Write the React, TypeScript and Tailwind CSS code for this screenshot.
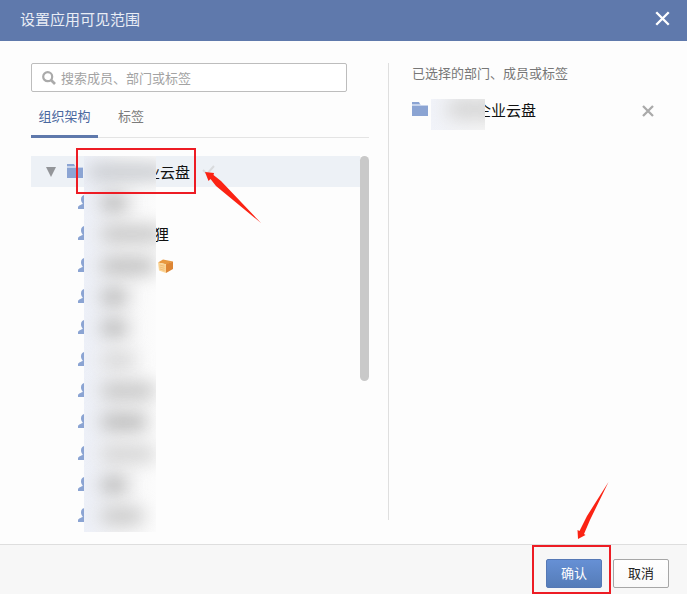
import React from "react";

type Smudge = {
  className: string;
};

type Member = {
  id: number;
  tail?: string;
  box?: boolean;
};

const members: Member[] = [
  { id: 1 },
  { id: 2, tail: "狸" },
  { id: 3, box: true },
  { id: 4 },
  { id: 5 },
  { id: 6 },
  { id: 7 },
  { id: 8 },
  { id: 9 },
  { id: 10 },
  { id: 11 },
];

// one entry per tree row, top to bottom
const smudges: Smudge[] = [
  { className: "ml-1 w-20 bg-[#c3c6cb]" },
  { className: "ml-4 w-7 bg-[#b2b2b2]" },
  { className: "ml-4 w-16 bg-[#c2c2c2]" },
  { className: "ml-4 w-14 bg-[#bababa]" },
  { className: "ml-4 w-7 bg-[#b2b2b2]" },
  { className: "ml-4 w-7 bg-[#b2b2b2]" },
  { className: "ml-4 w-9 bg-[#d4d4d4]" },
  { className: "ml-4 w-14 bg-[#c0c0c0]" },
  { className: "ml-4 w-12 bg-[#b4b4b4]" },
  { className: "ml-4 w-14 bg-[#d0d0d0]" },
  { className: "ml-4 w-7 bg-[#b2b2b2]" },
  { className: "ml-4 w-11 bg-[#c4c4c4]" },
];

const FolderIcon = () => (
  <svg width="16" height="14" viewBox="0 0 16 14" className="shrink-0">
    <path d="M0 0h7l1 2H0z" fill="#8ba4d3" />
    <path d="M0 4h16v10H0z" fill="#8ba4d3" />
    <path d="M0 2h8l1 1h7v1H0z" fill="#c6d3eb" />
  </svg>
);

const PersonIcon = () => (
  <svg width="14" height="14" viewBox="0 0 14 14" className="shrink-0">
    <path
      d="M7 0C4.500 0 3 1.700 3 4.200c0 1.700.6 3 1.600 4L4.600 9C3.200 9.800 0 10.600 0 12.200V14h14v-1.800c0-1.600-3.200-2.400-4.600-3.200v-.8c1-1 1.600-2.300 1.600-4C11 1.700 9.500 0 7 0z"
      fill="#8ba4d3"
    />
  </svg>
);

const BoxIcon = () => (
  <svg width="15" height="14" viewBox="0 0 15 14" className="shrink-0">
    <path d="M0 3.500 5 0.500 15 2.500 9 5.500z" fill="#e8983f" />
    <path d="M0 3.500 8 5.300V14L1 11.500z" fill="#fbd596" />
    <path d="M8 5.300 15 2.500V10L8 14z" fill="#dd8534" />
    <path d="M1.500 6l5 1.200M1.500 8l5 1.300M2 10l4.500 1.400" stroke="#eeb268" strokeWidth=".7" />
  </svg>
);

const CrossIcon = ({ size, width }: { size: number; width: number }) => (
  <svg width={size} height={size} viewBox="0 0 12 12" fill="none">
    <path d="M1 1l10 10M11 1L1 11" stroke="currentColor" strokeWidth={width} />
  </svg>
);

const Header = () => (
  <header className="flex h-[41px] items-center justify-between bg-[#5f79ac] pr-[17px] pl-5 text-[#e9edf5]">
    <h1 className="pb-1 text-[15px] leading-5">设置应用可见范围</h1>
    <button type="button" aria-label="关闭" className="pb-1 text-white">
      <CrossIcon size={15} width={1.9} />
    </button>
  </header>
);

const Tree = () => (
  <div className="relative mt-[18px] flex flex-1">
    <ul className="flex flex-1 flex-col text-[15px] leading-5 text-[#111]">
      <li className="flex flex-1 items-center bg-[#edf1f6] pl-[15px]">
        <button type="button" aria-label="收起">
          <svg width="10" height="10" viewBox="0 0 10 10">
            <path d="M0 0h10L5 10z" fill="#939599" />
          </svg>
        </button>
        <span className="ml-[11px] pb-0.5">
          <FolderIcon />
        </span>
        <span className="ml-8 pl-[30px]">业云盘</span>
        <span className="ml-3 pb-1">
          <svg width="13" height="10" viewBox="0 0 13 10" fill="none">
            <path d="M1 5l4 4 7-8" stroke="#d9dbdd" strokeWidth="2" />
          </svg>
        </span>
      </li>
      {members.map((member) => (
        <li key={member.id} className="flex flex-1 items-center pl-[47px]">
          <span className="pb-0.5">
            <PersonIcon />
          </span>
          {member.tail && <span className="ml-[62px]">{member.tail}</span>}
          {member.box && (
            <span className="ml-[66px]">
              <BoxIcon />
            </span>
          )}
        </li>
      ))}
    </ul>

    {/* names are hidden */}
    <div className="absolute inset-y-0 left-[53px] flex w-[72px] flex-col overflow-hidden bg-linear-to-r from-[#edf0f8] via-[#f6f6f7] to-[#fcfcfc]">
      {smudges.map((smudge, i) => (
        <div key={i} className="flex flex-1 items-center">
          <div className={`h-4 shrink-0 rounded-lg blur-[9px] ${smudge.className}`} />
        </div>
      ))}
    </div>

    <div className="h-[225px] w-[9px] rounded-full bg-[#c9c9c9]" />

    {/* callout around the root department */}
    <div className="pointer-events-none absolute -top-2 left-[45px] h-[46px] w-[120px] border-2 border-[#ed1c24]" />
    <svg
      width="57"
      height="53"
      viewBox="0 0 57 53"
      className="pointer-events-none absolute top-[15px] left-[174px]"
    >
      <path d="M0 1 9 2 8.500 4 16 10 56 52 11 15 5.500 8 3.500 10z" fill="#fb2314" />
    </svg>
  </div>
);

const Picker = () => (
  <section className="flex flex-col pt-[22px] pr-[19px] pb-3 pl-[31px]">
    <label className="mr-[22px] flex h-[29px] items-center rounded-xs border border-[#bdbdbd] bg-white pl-[10px]">
      <svg width="14" height="14" viewBox="0 0 14 14" fill="none" className="shrink-0">
        <circle cx="5.700" cy="5.700" r="4.500" stroke="#aaa" strokeWidth="2.200" />
        <path d="M9 9l4 4" stroke="#aaa" strokeWidth="2.600" />
      </svg>
      <input
        type="text"
        aria-label="搜索"
        placeholder="搜索成员、部门或标签"
        className="ml-[5px] min-w-0 flex-1 text-[13px] leading-5 outline-none placeholder:text-[#a3a3a3]"
      />
    </label>

    <div className="mt-[14px] flex h-8 border-b border-[#e4e4e4] text-[13px] leading-5">
      <button
        type="button"
        className="-mb-px flex w-[67px] justify-center border-b-3 border-[#5f79ac] text-[#4a689f]"
      >
        组织架构
      </button>
      <button type="button" className="ml-5 flex text-[#7b7b7b]">
        标签
      </button>
    </div>

    <Tree />
  </section>
);

const Selected = () => (
  <section className="mt-[22px] mb-6 border-l border-[#dfdfdf] pr-[33px] pl-[23px]">
    <h2 className="text-[13px] leading-5 text-[#777]">已选择的部门、成员或标签</h2>
    <div className="relative mt-4 flex h-[31px] items-start">
      <span className="pt-[3px]">
        <FolderIcon />
      </span>
      <span className="ml-12 pt-px text-[15px] leading-5 text-[#111]">企业云盘</span>
      <div className="absolute inset-y-0 left-[19px] flex w-[54px] overflow-hidden bg-linear-to-r from-[#f1f3f9] to-[#f6f6f6]">
        <div className="ml-4 h-5 w-14 shrink-0 rounded-lg bg-[#d4d4d4] blur-[9px]" />
      </div>
      <button type="button" aria-label="移除" className="ml-auto pt-1.5 text-[#aaa]">
        <CrossIcon size={12} width={2.3} />
      </button>
    </div>
  </section>
);

const Footer = () => (
  <footer className="flex h-[50px] items-center justify-end gap-[11px] border-t border-[#dedede] bg-[#f7f7f7] pt-2 pr-[18px] text-[13px] leading-5">
    <div className="relative">
      <button
        type="button"
        className="h-[29px] w-14 rounded-xs border border-[#5578b5] bg-linear-to-b from-[#6690d5] to-[#557cb8] pb-0.5 text-white"
      >
        确认
      </button>
      {/* callout around the confirm button */}
      <div className="pointer-events-none absolute -top-[14px] -right-[9px] -bottom-[6px] -left-[14px] border-2 border-[#ed1c24]" />
      <svg
        width="32"
        height="58"
        viewBox="0 0 32 58"
        className="pointer-events-none absolute bottom-[48px] left-[31px]"
      >
        <path d="M1 57 0.500 48 2.500 49 10 34 31.500 0 13 38 7 52 8.500 53z" fill="#fb2314" />
      </svg>
    </div>
    <button
      type="button"
      className="h-[29px] w-14 rounded-xs border border-[#a6a6a6] bg-linear-to-b from-white to-[#f9f9f9] pb-0.5 text-[#222]"
    >
      取消
    </button>
  </footer>
);

const App: React.FC = () => {
  return (
    <div className="flex min-h-screen w-full flex-col overflow-hidden bg-[#fdfdfd] font-['Noto_Sans_CJK_SC',sans-serif]">
      <Header />
      <main className="grid flex-1 grid-cols-[388fr_299fr]">
        <Picker />
        <Selected />
      </main>
      <Footer />
    </div>
  );
};

export default App;
